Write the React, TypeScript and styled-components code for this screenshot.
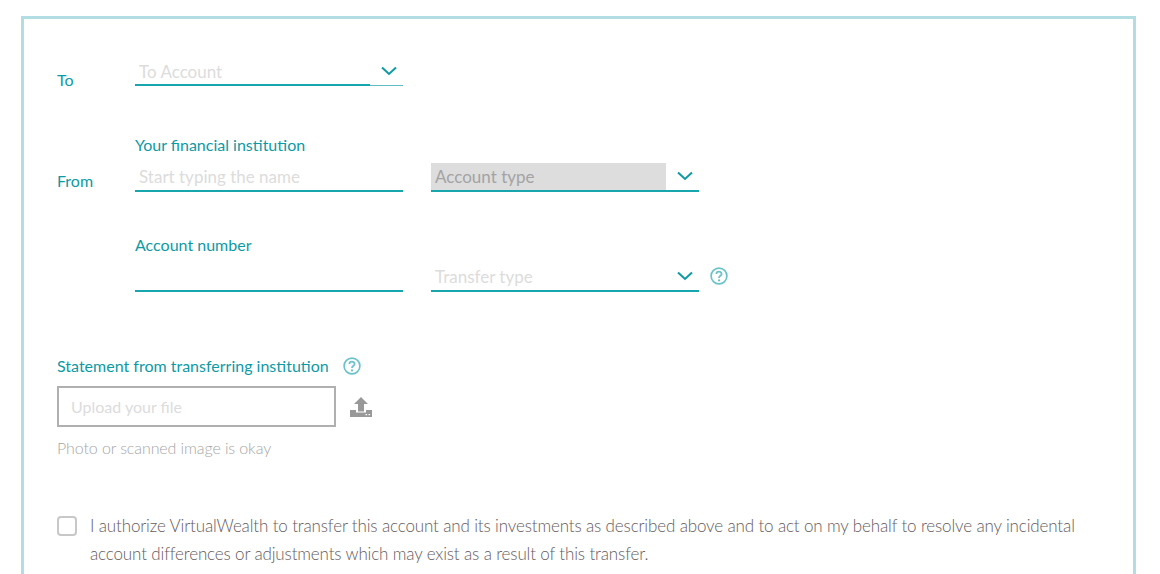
import styled, { createGlobalStyle } from 'styled-components'

const teal = '#0d9aa5'

const GlobalStyle = createGlobalStyle`
	html, body {
		margin: 0;
		height: 574px;
		overflow: hidden;
		background: #fff;
		font-family: "Lato", "Open Sans", sans-serif;
	}
`

const Page = styled.div`
	height: 574px;
	overflow: hidden;
	padding: 16px 24px 0 21px;
`

const Card = styled.form`
	height: 558px;
	box-sizing: border-box;
	border: 3px solid #b2dde2;
	border-bottom: 0;
	padding: 0 33px;
`

const Row = styled.div<{ $top: number }>`
	display: flex;
	align-items: flex-start;
	margin-top: ${props => props.$top}px;
`

const RowLabel = styled.label<{ $top: number }>`
	width: 78px;
	flex-shrink: 0;
	margin-top: ${props => props.$top}px;
	font-size: 16px;
	line-height: 20px;
	color: ${teal};
`

const FieldStack = styled.div`
	display: flex;
	flex-direction: column;
	gap: 43px;
`

const FieldRow = styled.div`
	display: flex;
	gap: 28px;
	align-items: flex-end;
`

const Field = styled.div`
	width: 268px;
`

const FieldLabel = styled.div`
	font-size: 16px;
	line-height: 20px;
	margin-bottom: 10px;
	color: ${teal};
`

const InputLine = styled.div`
	position: relative;
	display: flex;
	align-items: center;
	height: 27px;
	box-sizing: border-box;
	padding: 0 0 2px 4px;
	border-bottom: 2px solid #17a5ae;
	font-size: 17px;
	color: #dcdcdc;
`

const SelectLine = styled(InputLine)<{ $disabled?: boolean; $split?: boolean }>`
	color: ${props => (props.$disabled ? '#a3a3a3' : '#dcdcdc')};
	border-bottom: ${props => (props.$split ? '1px solid #5fbcc4' : '2px solid #17a5ae')};
	&::before {
		content: '';
		position: absolute;
		left: 0;
		top: -2px;
		bottom: 0;
		width: 235px;
		background: ${props => (props.$disabled ? '#dddddd' : 'transparent')};
	}
	&::after {
		content: '';
		display: ${props => (props.$split ? 'block' : 'none')};
		position: absolute;
		left: 0;
		bottom: -1px;
		width: 235px;
		height: 2px;
		background: #17a5ae;
	}
`

const SelectText = styled.span`
	position: relative;
`

const Chevron = styled.svg<{ $top: number }>`
	position: absolute;
	right: 6px;
	top: ${props => props.$top}px;
	width: 16px;
	height: 10px;
	fill: none;
	stroke: ${teal};
	stroke-width: 2;
`

const HelpIcon = styled.svg`
	width: 18px;
	height: 18px;
	flex-shrink: 0;
`

const HelpSlot = styled.div`
	display: flex;
	margin: 0 0 7px -17px;
`

const UploadSection = styled.section`
	margin-top: 64px;
`

const UploadTitle = styled.div`
	display: flex;
	align-items: center;
	gap: 14px;
	font-size: 16px;
	line-height: 20px;
	color: ${teal};
`

const UploadRow = styled.div`
	display: flex;
	align-items: center;
	gap: 14px;
	margin-top: 10px;
`

const UploadBox = styled.div`
	width: 279px;
	height: 41px;
	box-sizing: border-box;
	border: 2px solid #b0b0b0;
	padding-left: 12px;
	display: flex;
	align-items: center;
	font-size: 16px;
	color: #dcdcdc;
`

const Hint = styled.div`
	margin-top: 11px;
	font-size: 16px;
	line-height: 20px;
	font-weight: 300;
	letter-spacing: -0.1px;
	color: #a6a6a6;
`

const Consent = styled.div`
	display: flex;
	gap: 13px;
	margin-top: 54px;
`

const Checkbox = styled.span`
	width: 20px;
	height: 20px;
	flex-shrink: 0;
	margin-top: 4px;
	box-sizing: border-box;
	border: 2px solid #c8c8c8;
	border-radius: 4px;
`

const ConsentText = styled.p`
	margin: 0;
	width: 1000px;
	font-size: 17px;
	line-height: 28px;
	font-weight: 300;
	letter-spacing: -0.145px;
	color: #655b60;
`

const ChevronIcon = ({ top = 6 }: { top?: number }) => (
	<Chevron $top={top} viewBox="0 0 16 10">
		<path d="M1 1.5 L8 8 L15 1.5" />
	</Chevron>
)

const Help = () => (
	<HelpIcon viewBox="0 0 18 18">
		<circle cx="9" cy="9" r="7.9" fill="none" stroke="#6cc2cb" strokeWidth="1.7" />
		<path d="M6.4 7 C6.4 3.9 11.6 3.9 11.6 6.9 C11.6 8.8 9 8.8 9 11" fill="none" stroke="#6cc2cb" strokeWidth="1.8" />
		<circle cx="9" cy="13.4" r="1.1" fill="#6cc2cb" />
	</HelpIcon>
)

const UploadIcon = () => (
	<svg width="22" height="20" viewBox="0 0 22 20">
		<path d="M11 0 L18 7 L14 7 L14 14.5 L8 14.5 L8 7 L4 7 Z" fill="#999999" />
		<path d="M0 13 L6 13 L6 15.5 L16 15.5 L16 13 L22 13 L22 20 L0 20 Z" fill="#999999" />
		<rect x="15.5" y="17" width="1.6" height="1.2" fill="#fff" />
		<rect x="18.5" y="17" width="1.6" height="1.2" fill="#fff" />
	</svg>
)

const App = () => {
	return (
		<Page>
			<GlobalStyle />
			<Card>
				<Row $top={40}>
					<RowLabel $top={11}>To</RowLabel>
					<Field>
						<SelectLine $split>
							<SelectText>To Account</SelectText>
							<ChevronIcon top={7} />
						</SelectLine>
					</Field>
				</Row>
				<Row $top={45}>
					<RowLabel $top={36}>From</RowLabel>
					<FieldStack>
						<FieldRow>
							<Field>
								<FieldLabel>Your financial institution</FieldLabel>
								<InputLine>Start typing the name</InputLine>
							</Field>
							<Field>
								<SelectLine $disabled>
									<SelectText>Account type</SelectText>
									<ChevronIcon />
								</SelectLine>
							</Field>
						</FieldRow>
						<FieldRow>
							<Field>
								<FieldLabel>Account number</FieldLabel>
								<InputLine />
							</Field>
							<Field>
								<SelectLine>
									<SelectText>Transfer type</SelectText>
									<ChevronIcon />
								</SelectLine>
							</Field>
							<HelpSlot><Help /></HelpSlot>
						</FieldRow>
					</FieldStack>
				</Row>
				<UploadSection>
					<UploadTitle>
						Statement from transferring institution
						<Help />
					</UploadTitle>
					<UploadRow>
						<UploadBox>Upload your file</UploadBox>
						<UploadIcon />
					</UploadRow>
					<Hint>Photo or scanned image is okay</Hint>
				</UploadSection>
				<Consent>
					<Checkbox />
					<ConsentText>
						I authorize VirtualWealth to transfer this account and its investments as described above and to act on my behalf to resolve any incidental account differences or adjustments which may exist as a result of this transfer.
					</ConsentText>
				</Consent>
			</Card>
		</Page>
	)
}

export default App
